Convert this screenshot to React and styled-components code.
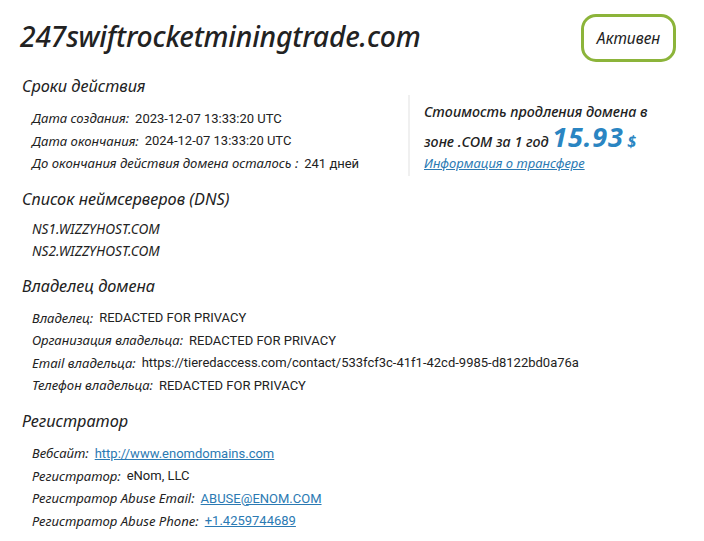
import React from "react";
import styled, { createGlobalStyle } from "styled-components";

const GlobalStyle = createGlobalStyle`
  body {
    margin: 0;
    background: #fff;
    color: #222;
    font-family: "Noto Sans", "Open Sans", sans-serif;
  }
`;

const dates = [
  ["Дата создания:", "2023-12-07 13:33:20 UTC"],
  ["Дата окончания:", "2024-12-07 13:33:20 UTC"],
  ["До окончания действия домена осталось :", "241 дней"],
];

const owner = [
  ["Владелец:", "REDACTED FOR PRIVACY"],
  ["Организация владельца:", "REDACTED FOR PRIVACY"],
  ["Email владельца:", "https://tieredaccess.com/contact/533fcf3c-41f1-42cd-9985-d8122bd0a76a"],
  ["Телефон владельца:", "REDACTED FOR PRIVACY"],
];

const registrar = [
  ["Вебсайт:", "http://www.enomdomains.com", true],
  ["Регистратор:", "eNom, LLC"],
  ["Регистратор Abuse Email:", "ABUSE@ENOM.COM", true],
  ["Регистратор Abuse Phone:", "+1.4259744689", true],
];

const Row = ({ label, value, link }) => (
  <Line>
    <Label>{label}</Label>
    {link ? <Link href="#">{value}</Link> : <Value>{value}</Value>}
  </Line>
);

export default function App() {
  return (
    <>
      <GlobalStyle />
      <Page>
        <Header>
          <Domain>247swiftrocketminingtrade.com</Domain>
          <Status>Активен</Status>
        </Header>

        <Section>
          <Heading>Сроки действия</Heading>
          <Split>
            <List>
              {dates.map(([l, v]) => (
                <Row key={l} label={l} value={v} />
              ))}
            </List>
            <PriceBox>
              <PriceText>Стоимость продления домена в</PriceText>
              <PriceText>
                зоне .COM за 1 год <Price>15.93</Price> <Currency>$</Currency>
              </PriceText>
              <TransferLink href="#">Информация о трансфере</TransferLink>
            </PriceBox>
          </Split>
        </Section>

        <Section>
          <Heading>Список неймсерверов (DNS)</Heading>
          <List $tight>
            <Server>NS1.WIZZYHOST.COM</Server>
            <Server>NS2.WIZZYHOST.COM</Server>
          </List>
        </Section>

        <Section>
          <Heading>Владелец домена</Heading>
          <List>
            {owner.map(([l, v]) => (
              <Row key={l} label={l} value={v} />
            ))}
          </List>
        </Section>

        <Section>
          <Heading>Регистратор</Heading>
          <List>
            {registrar.map(([l, v, link]) => (
              <Row key={l} label={l} value={v} link={link} />
            ))}
          </List>
        </Section>
      </Page>
    </>
  );
}

const Page = styled.div`
  width: 704px;
  box-sizing: border-box;
  padding: 14px 28px 0 22px;
`;

const Header = styled.div`
  display: flex;
  align-items: center;
  justify-content: space-between;
  height: 48px;
  margin-bottom: 13px;
`;

const Domain = styled.h1`
  margin: -4px 0 0 -2px;
  font-size: 28.3px;
  font-weight: 500;
  font-style: italic;
  color: #222;
  letter-spacing: -0.2px;
`;

const Status = styled.div`
  box-sizing: border-box;
  width: 95px;
  height: 48px;
  border: 3px solid #8cb43a;
  border-radius: 15px;
  display: flex;
  align-items: center;
  justify-content: center;
  font-size: 15.5px;
  font-style: italic;
  color: #222;
`;

const Section = styled.div`
  margin-bottom: 13.5px;
`;

const Heading = styled.h2`
  margin: 0 0 10px;
  font-size: 16.3px;
  font-weight: 400;
  font-style: italic;
  line-height: 22px;
  color: #222;
`;

const Split = styled.div`
  display: flex;
  align-items: flex-start;
`;

const List = styled.div`
  display: flex;
  flex-direction: column;
  padding-left: 10px;
  margin-top: ${(p) => (p.$tight ? "-3px" : "0")};
  width: 376px;
  flex: none;
`;

const Line = styled.div`
  display: flex;
  gap: 6px;
  height: 22.5px;
  align-items: center;
  white-space: nowrap;
`;

const Label = styled.span`
  font-size: 13.1px;
  font-style: italic;
  color: #222;
`;

const Value = styled.span`
  font-family: "Roboto", "Liberation Sans", sans-serif;
  font-size: 13px;
  color: #222;
`;

const Link = styled.a`
  font-family: "Roboto", "Liberation Sans", sans-serif;
  font-size: 13px;
  color: #2b7ab3;
  text-decoration: underline;
`;

const Server = styled.div`
  height: 22px;
  display: flex;
  align-items: center;
  font-size: 13.6px;
  font-style: italic;
  color: #222;
`;

const PriceBox = styled.div`
  margin: -12px 0 -8px;
  border-left: 2px solid #f0f0f0;
  padding: 4px 0 4px 14px;
  display: flex;
  flex-direction: column;
`;

const PriceText = styled.div`
  font-size: 14.3px;
  font-weight: 500;
  font-style: italic;
  color: #222;
  line-height: 25px;
`;

const Price = styled.span`
  font-size: 27px;
  font-weight: 700;
  letter-spacing: 0.8px;
  color: #2a85c2;
`;

const Currency = styled.span`
  font-size: 16px;
  font-weight: 700;
  color: #2a85c2;
`;

const TransferLink = styled.a`
  font-size: 13px;
  font-style: italic;
  color: #2b7ab3;
  text-decoration: underline;
  line-height: 18px;
`;
